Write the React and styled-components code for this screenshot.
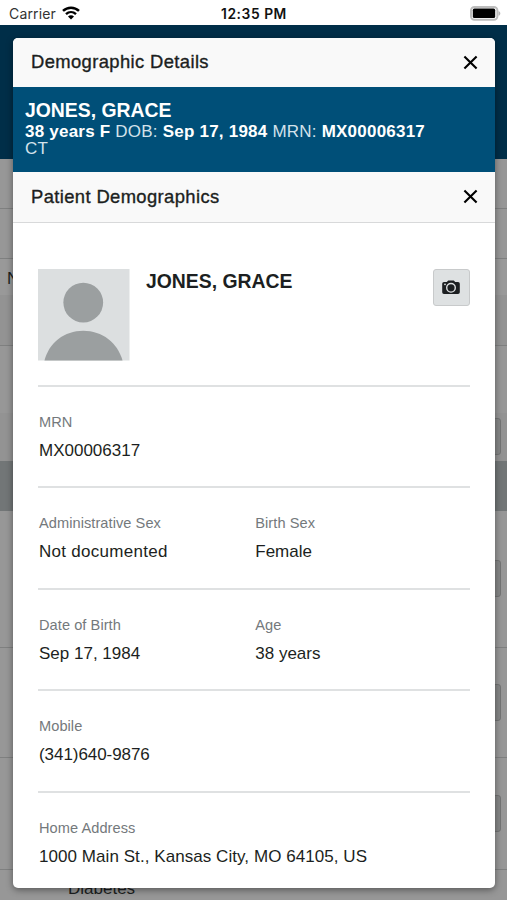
import styled, { createGlobalStyle } from 'styled-components';

const GlobalStyle = createGlobalStyle`
  * {
    box-sizing: border-box;
  }

  body {
    margin: 0;
    font-family: 'Liberation Sans', Arial, sans-serif;
    color: #1c1f21;
  }
`;

const Screen = styled.div`
  position: relative;
  display: flex;
  flex-direction: column;
  height: 900px;
  overflow: hidden;
  background-color: #979797;
`;

const StatusBar = styled.header`
  display: grid;
  grid-template-columns: 1fr auto 1fr;
  align-items: center;
  flex: none;
  height: 25px;
  padding: 2px 6px 0 9px;
  background-color: #fff;
  font-family: Inter, sans-serif;
`;

const Carrier = styled.div`
  display: flex;
  align-items: center;
  gap: 6px;
  font-size: 14px;
  letter-spacing: 0.15px;
  color: #333;

  svg {
    margin-top: -2px;
  }
`;

const Clock = styled.div`
  margin-right: 2px;
  font-size: 13.8px;
  font-weight: 600;
  letter-spacing: 0.55px;
  color: #111;
`;

const Battery = styled.svg`
  justify-self: end;
`;

/* chart behind the modal */
const ChartBanner = styled.div`
  flex: none;
  height: 134px;
  background-color: #002e48;
`;

const ChartRow = styled.div`
  display: flex;
  align-items: flex-start;
  justify-content: space-between;
  flex: none;
  height: ${(props) => props.$height}px;
  padding: ${(props) => props.$padding || '0 6px'};
  border-bottom: ${(props) => (props.$line ? '1px solid #7f8080' : 'none')};
  background-color: ${(props) => props.$color || '#979797'};
  font-size: 17px;
  line-height: 20px;
`;

const RowButton = styled.div`
  width: 36px;
  height: 37px;
  margin-left: auto;
  border: 1px solid #737474;
  border-radius: 3px;
  background-color: #858686;
`;

const Modal = styled.main`
  position: absolute;
  top: 37.5px;
  right: 12.5px;
  bottom: 12.5px;
  left: 13px;
  display: flex;
  flex-direction: column;
  overflow: hidden;
  border-radius: 5px;
  background-color: #fff;
  box-shadow: 0 2px 7px rgba(0, 0, 0, 0.42);
`;

const Header = styled.div`
  display: flex;
  align-items: center;
  justify-content: space-between;
  flex: none;
  height: ${(props) => props.$height}px;
  padding: 0 17px 0 18px;
  border-bottom: ${(props) => (props.$line ? '1px solid #d8d9da' : 'none')};
  background-color: #f9f9f9;
`;

const Title = styled.h2`
  margin: 0;
  font-size: 18.4px;
  font-weight: 400;
  line-height: 20px;
  letter-spacing: 0.38px;
  -webkit-text-stroke: 0.35px #1c1f21;
`;

const CloseButton = styled.button`
  display: flex;
  padding: 0;
  border: none;
  background: none;
  color: #000;
`;

const PatientBanner = styled.div`
  flex: none;
  height: 85px;
  padding: 12px 12px 0;
  background-color: #004f78;
  color: #fff;
  font-size: 17px;
  line-height: 17.5px;
`;

const BannerName = styled.div`
  font-size: 19.4px;
  font-weight: 700;
  line-height: 23.5px;
`;

const BannerLine = styled.div`
  white-space: nowrap;
  letter-spacing: 0.22px;
  color: #d3e2eb;

  strong {
    color: #fff;
  }
`;

const Content = styled.div`
  padding: 46.5px 25px 0;
`;

const Profile = styled.section`
  display: flex;
  align-items: flex-start;
  height: 116px;
`;

const ProfileName = styled.h1`
  flex: 1;
  margin: 0 0 0 16.5px;
  font-size: 19.4px;
  font-weight: 700;
  line-height: 24px;
`;

const CameraButton = styled.button`
  display: flex;
  align-items: center;
  justify-content: center;
  width: 37px;
  height: 37px;
  padding: 0;
  border: 1px solid #c8cacb;
  border-radius: 3px;
  background-color: #dee1e2;
`;

const DetailRow = styled.section`
  display: grid;
  grid-template-columns: 1fr 1fr;
  column-gap: 2px;
  height: 101.4px;
  padding: 26px 0 0 1px;
  border-top: 2px solid #dfe1e2;
`;

const Label = styled.div`
  margin-bottom: 10px;
  font-size: 14.6px;
  line-height: 18px;
  letter-spacing: 0.06px;
  color: #74797c;
`;

const Value = styled.div`
  font-size: 17px;
  line-height: 20px;
  letter-spacing: ${(props) => props.$tracking || 0}px;
  white-space: nowrap;
`;

const details = [
  [{ label: 'MRN', value: 'MX00006317' }],
  [
    { label: 'Administrative Sex', value: 'Not documented', tracking: 0.28 },
    { label: 'Birth Sex', value: 'Female' },
  ],
  [
    { label: 'Date of Birth', value: 'Sep 17, 1984' },
    { label: 'Age', value: '38 years' },
  ],
  [{ label: 'Mobile', value: '(341)640-9876', tracking: -0.06 }],
  [
    {
      label: 'Home Address',
      value: '1000 Main St., Kansas City, MO 64105, US',
      tracking: 0.06,
    },
  ],
];

function WifiIcon() {
  return (
    <svg width="18" height="14" viewBox="0 0 18 14" fill="none" stroke="#000">
      <path d="M1 4.9C5.5.6 12.5.6 17 4.9" strokeWidth="2.5" />
      <path d="M4 8.1c2.9-2.7 7.1-2.7 10 0" strokeWidth="2.4" />
      <path d="M9 13.4 6 10.5c1.7-1.6 4.3-1.6 6 0z" fill="#000" stroke="none" />
    </svg>
  );
}

function BatteryIcon() {
  return (
    <Battery width="31" height="15" viewBox="0 0 31 15">
      <rect x="1" y="1" width="26.4" height="12.8" rx="3.5" fill="#fff" stroke="#bdbdbd" strokeWidth="2" />
      <rect x="2.8" y="2.6" width="22.4" height="9.4" rx="1.6" />
      <path d="M28.5 5c2.4.8 2.4 4 0 4.8z" fill="#b5b5b5" />
    </Battery>
  );
}

function CloseIcon() {
  return (
    <svg width="15" height="15" viewBox="0 0 15 15" fill="none" stroke="currentColor">
      <path d="m1.4 1.4 12.2 12.2M13.6 1.4 1.4 13.6" strokeWidth="2.1" />
    </svg>
  );
}

function Avatar() {
  return (
    <svg width="91.5" height="91.5" viewBox="0 0 92 92">
      <rect width="92" height="92" fill="#dcdfe0" />
      <circle cx="45.5" cy="33.7" r="20" fill="#9b9fa0" />
      <path d="M6.5 92C11 74 26.5 62 45.5 62S80 74 85 92z" fill="#9b9fa0" />
    </svg>
  );
}

function CameraIcon() {
  return (
    <svg width="18" height="15" viewBox="0 0 18 15">
      <path
        d="M2 2h2.8L6.2.6h5.6L13.2 2H16a1.8 1.8 0 0 1 1.8 1.8v8.4A1.8 1.8 0 0 1 16 14H2a1.8 1.8 0 0 1-1.8-1.8V3.8A1.8 1.8 0 0 1 2 2z"
        fill="#1c1f21"
      />
      <circle cx="9" cy="7.8" r="4.3" fill="none" stroke="#dee1e2" strokeWidth="1.4" />
      <circle cx="3" cy="4.3" r=".9" fill="#dee1e2" />
    </svg>
  );
}

function Close() {
  return (
    <CloseButton aria-label="Close">
      <CloseIcon />
    </CloseButton>
  );
}

function Chart() {
  return (
    <>
      <ChartBanner />
      <ChartRow $height={50} $line />
      <ChartRow $height={50} $line />
      <ChartRow $height={36} $padding="10px 7px" $color="#999">
        Name
      </ChartRow>
      <ChartRow $height={51} $color="#939393" $line />
      <ChartRow $height={67} />
      <ChartRow $height={48} $padding="5px 6px" $color="#939393">
        <RowButton />
      </ChartRow>
      <ChartRow $height={50} $color="#727677" />
      <ChartRow $height={137} $padding="49px 6px" $line>
        <RowButton />
      </ChartRow>
      <ChartRow $height={110} $padding="36px 6px" $line>
        <RowButton />
      </ChartRow>
      <ChartRow $height={112} $padding="37px 6px" $line>
        <RowButton />
      </ChartRow>
      <ChartRow $height={60} $padding="9px 68px">
        Diabetes
      </ChartRow>
    </>
  );
}

const App = () => {
  return (
    <>
      <GlobalStyle />
      <Screen>
        <StatusBar>
          <Carrier>
            Carrier
            <WifiIcon />
          </Carrier>
          <Clock>12:35 PM</Clock>
          <BatteryIcon />
        </StatusBar>

        <Chart />

        <Modal>
          <Header $height={49.5}>
            <Title>Demographic Details</Title>
            <Close />
          </Header>

          <PatientBanner>
            <BannerName>JONES, GRACE</BannerName>
            <BannerLine>
              <strong>38 years</strong> <strong>F</strong> DOB:{' '}
              <strong>Sep 17, 1984</strong> MRN: <strong>MX00006317</strong>
            </BannerLine>
            <BannerLine>CT</BannerLine>
          </PatientBanner>

          <Header $height={50.5} $line>
            <Title>Patient Demographics</Title>
            <Close />
          </Header>

          <Content>
            <Profile>
              <Avatar />
              <ProfileName>JONES, GRACE</ProfileName>
              <CameraButton aria-label="Take photo">
                <CameraIcon />
              </CameraButton>
            </Profile>

            {details.map((row) => (
              <DetailRow key={row[0].label}>
                {row.map(({ label, value, tracking }) => (
                  <div key={label}>
                    <Label>{label}</Label>
                    <Value $tracking={tracking}>{value}</Value>
                  </div>
                ))}
              </DetailRow>
            ))}
          </Content>
        </Modal>
      </Screen>
    </>
  );
};

export default App;
